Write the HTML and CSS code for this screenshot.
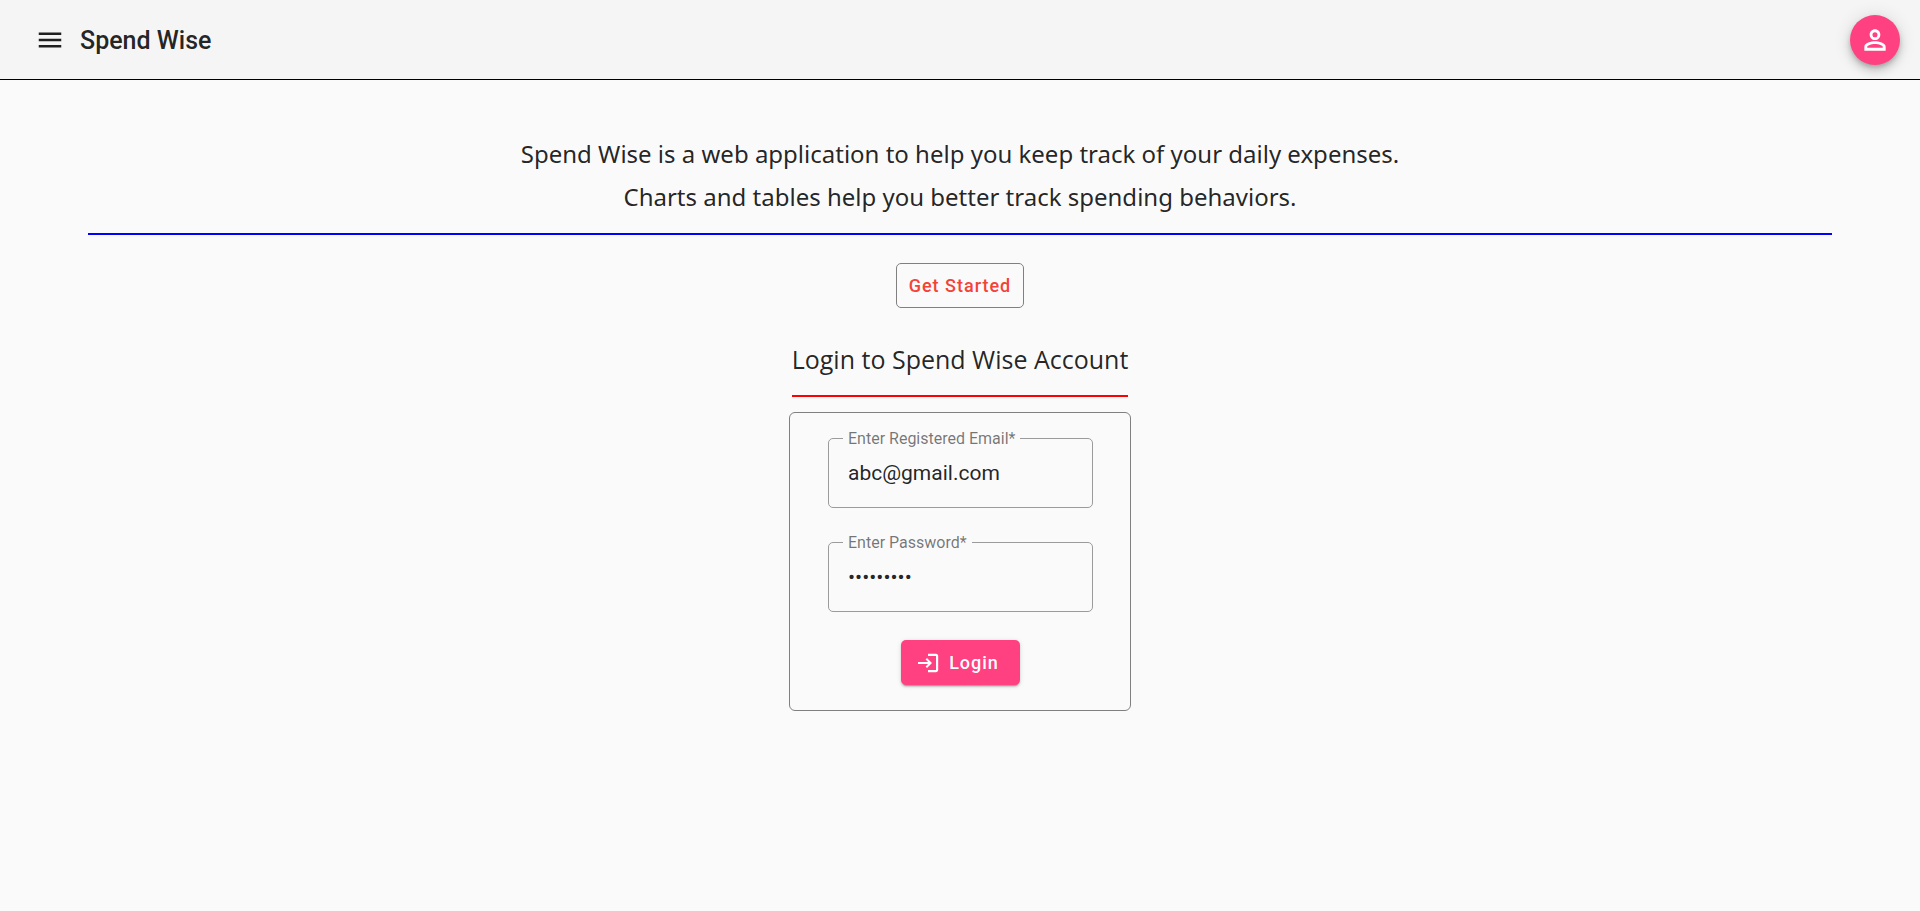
FILE: index.html
```html
<!DOCTYPE html>
<html lang="en">
<head>
<meta charset="utf-8">
<meta name="viewport" content="width=device-width, initial-scale=1">
<title>Spend Wise</title>
<link rel="stylesheet" href="styles.css">
</head>
<body>
<header class="toolbar">
  <button class="menu-button" type="button" aria-label="Menu">
    <svg class="icon" viewBox="0 0 24 24" aria-hidden="true"><path d="M3 18h18v-2H3v2zm0-5h18v-2H3v2zm0-7v2h18V6H3z"/></svg>
  </button>
  <span class="brand">Spend Wise</span>
  <button class="profile-button" type="button" aria-label="Profile">
    <svg class="icon profile-icon" viewBox="0 0 24 24" aria-hidden="true"><path fill-rule="evenodd" d="M12 6.200a1.900 1.900 0 1 1 0 3.800 1.900 1.900 0 0 1 0-3.800zM12 4C9.790 4 8 5.790 8 8s1.790 4 4 4 4-1.790 4-4-1.790-4-4-4zm0 11c2.900 0 5.800 1.300 5.800 2v.8H6.200V17c0-.7 2.900-2 5.800-2zm0-2c-2.670 0-8 1.340-8 4v3h16v-3c0-2.660-5.330-4-8-4z"/></svg>
  </button>
</header>
<main class="page">
  <section class="intro">
    <p class="intro-line">Spend Wise is a web application to help you keep track of your daily expenses.</p>
    <p class="intro-line">Charts and tables help you better track spending behaviors.</p>
  </section>
  <button class="start-button" type="button">Get Started</button>
  <h1 class="login-title">Login to Spend Wise Account</h1>
  <form class="login-card">
    <div class="field">
      <label class="field-label" for="email">Enter Registered Email*</label>
      <input class="field-input" id="email" type="email" value="abc@gmail.com">
    </div>
    <div class="field">
      <label class="field-label" for="password">Enter Password*</label>
      <input class="field-input" id="password" type="password" value="abcdefghi">
    </div>
    <button class="login-button" type="button">
      <svg class="login-icon" viewBox="0 0 24 24" aria-hidden="true"><path d="M11 7 9.600 8.400l2.500 2.500H2v2.200h10.100l-2.500 2.500L11 17l5-5-5-5zm9 12h-8v2.200h8c1.200 0 2.200-1 2.200-2.200V5c0-1.200-1-2.200-2.200-2.200h-8V5h8v14z"/></svg>
      Login
    </button>
  </form>
</main>
</body>
</html>
```
FILE: styles.css
```css
* { box-sizing: border-box; }

body {
  margin: 0;
  background: #fafafa;
  color: rgba(0, 0, 0, 0.87);
  font-family: Roboto, "Liberation Sans", sans-serif;
}

button {
  border: 0;
  padding: 0;
  background: none;
  color: inherit;
  font: inherit;
  cursor: pointer;
}

.toolbar {
  display: flex;
  align-items: center;
  height: 80px;
  padding: 1px 20px 0 35px;
  background: #f5f5f5;
  border-bottom: 1px solid #000;
}

.menu-button { display: flex; }

.icon {
  display: block;
  width: 30px;
  height: 30px;
  fill: currentColor;
}

.profile-icon {
  width: 32px;
  height: 32px;
}

.brand {
  margin-left: 15px;
  font-size: 25px;
  font-weight: 500;
}

.profile-button {
  display: flex;
  align-items: center;
  justify-content: center;
  width: 50px;
  height: 50px;
  margin-left: auto;
  border-radius: 50%;
  background: #ff4081;
  color: #fff;
  box-shadow: 0 3px 5px -1px rgba(0, 0, 0, 0.2), 0 6px 10px 0 rgba(0, 0, 0, 0.14), 0 1px 18px 0 rgba(0, 0, 0, 0.12);
}

.page {
  display: flex;
  flex-direction: column;
  align-items: center;
  padding: 52px 88px 40px;
}

.intro {
  width: 100%;
  padding-bottom: 15px;
  border-bottom: 2px solid #00f;
  text-align: center;
  font-family: "Noto Sans", sans-serif;
  font-size: 24px;
  line-height: 43px;
}

.intro-line { margin: 0; }

.start-button {
  height: 45px;
  margin-top: 28px;
  padding: 0 12px;
  border: 1px solid gray;
  border-radius: 5px;
  color: #f44336;
  font-size: 18px;
  font-weight: 500;
  letter-spacing: 1px;
}

.login-title {
  margin: 31px 0 15px;
  padding-bottom: 16px;
  border-bottom: 2px solid #f00;
  font-family: "Open Sans", sans-serif;
  font-size: 25px;
  font-weight: 400;
  line-height: 40px;
}

.login-card {
  display: flex;
  flex-direction: column;
  align-items: center;
  width: 342px;
  padding: 25px 37px 25px 38px;
  border: 1px solid gray;
  border-radius: 6px;
}

.field {
  position: relative;
  width: 100%;
  margin-bottom: 34px;
}

.field-label {
  position: absolute;
  top: -9px;
  left: 15px;
  padding: 0 5px;
  background: #fafafa;
  color: rgba(0, 0, 0, 0.54);
  font-size: 16px;
  line-height: 20px;
}

.field-input {
  display: block;
  width: 100%;
  height: 70px;
  padding: 0 19px;
  border: 1px solid #9b9b9b;
  border-radius: 5px;
  background: transparent;
  color: inherit;
  font-family: inherit;
  font-size: 21px;
}

.login-button {
  display: flex;
  align-items: center;
  gap: 9px;
  height: 45px;
  padding: 0 21px 0 15px;
  margin-top: -6px;
  border-radius: 5px;
  background: #ff4081;
  color: #fff;
  font-size: 18px;
  font-weight: 500;
  letter-spacing: 1px;
  box-shadow: 0 3px 1px -2px rgba(0, 0, 0, 0.2), 0 2px 2px 0 rgba(0, 0, 0, 0.14), 0 1px 5px 0 rgba(0, 0, 0, 0.12);
}

.login-icon {
  width: 24px;
  height: 24px;
  fill: currentColor;
}
```
